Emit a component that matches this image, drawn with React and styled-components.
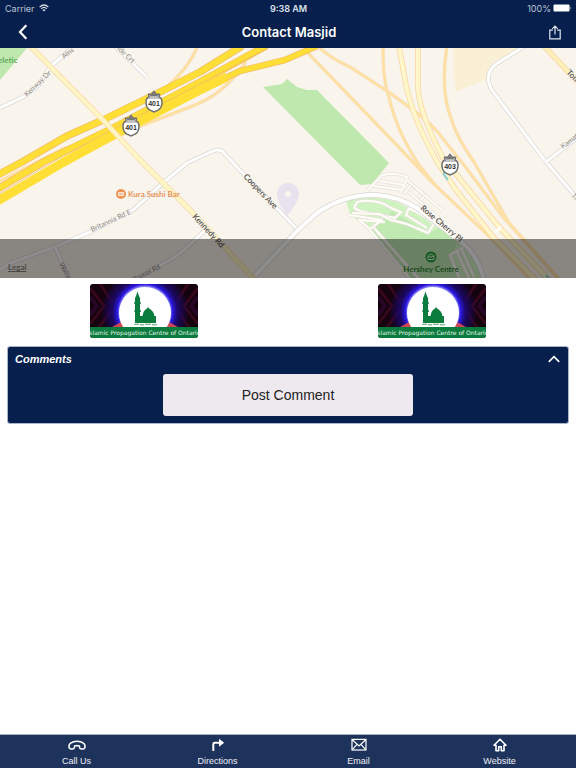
import React from "react";
import styled, { createGlobalStyle } from "styled-components";

function App() {
  const [open, setOpen] = React.useState(true);

  return (
    <Page>
      <GlobalStyle />
      <Header>
        <StatusBar>
          <StatusItem>
            Carrier <WifiIcon />
          </StatusItem>
          <Clock>9:38 AM</Clock>
          <StatusItem end>
            100% <BatteryIcon />
          </StatusItem>
        </StatusBar>
        <TitleBar>
          <IconButton aria-label="Back">
            <BackIcon />
          </IconButton>
          <Title>Contact Masjid</Title>
          <IconButton aria-label="Share">
            <ShareIcon />
          </IconButton>
        </TitleBar>
      </Header>
      <Main>
        <MapBox>
          <MasjidMap />
          <MapShade>
            <LegalLink href="#legal">Legal</LegalLink>
          </MapShade>
        </MapBox>
        <Logos>
          <LogoCell>
            <Logo id="left" />
          </LogoCell>
          <LogoCell>
            <Logo id="right" />
          </LogoCell>
        </Logos>
        <Comments>
          <CommentsHead>
            <CommentsTitle>Comments</CommentsTitle>
            <Toggle
              aria-label="Toggle comments"
              aria-expanded={open}
              onClick={() => setOpen(!open)}
            >
              <ChevronIcon />
            </Toggle>
          </CommentsHead>
          {open && <PostButton>Post Comment</PostButton>}
        </Comments>
      </Main>
      <TabBar>
        <Tab href="#call">
          <PhoneIcon />
          Call Us
        </Tab>
        <Tab href="#directions">
          <TurnIcon />
          Directions
        </Tab>
        <Tab href="#email">
          <MailIcon />
          Email
        </Tab>
        <Tab href="#website">
          <HomeIcon />
          Website
        </Tab>
      </TabBar>
    </Page>
  );
}

export default App;

const WifiIcon = () => (
  <svg width="10" height="8" viewBox="0 0 10 8" fill="none" stroke="#d5dae5" strokeWidth="1.2">
    <path d="M0.6 3.1Q5-1.1 9.4 3.1M2.2 4.8Q5 2.1 7.8 4.8" />
    <path d="M3.4 5.9Q5 4.5 6.6 5.9L5 7.6Z" fill="#d5dae5" stroke="none" />
  </svg>
);

const BatteryIcon = () => (
  <svg width="19" height="8" viewBox="0 0 19 8" fill="#fff">
    <rect x="0.5" y="0.5" width="16" height="7" rx="1" />
    <path d="M17.2 2.5q1.4 1.5 0 3z" />
  </svg>
);

const BackIcon = () => (
  <svg width="10" height="16" viewBox="0 0 10 16" fill="none" stroke="#fff" strokeWidth="2.2">
    <path d="M8.3 1.2L2 8l6.3 6.8" />
  </svg>
);

const ShareIcon = () => (
  <svg width="12" height="15" viewBox="0 0 12 15" fill="none" stroke="#e3e7ef" strokeWidth="1.2">
    <path d="M3.8 5.2H0.8v8.6h10.4V5.2H8.2M6 9.6V1.4M3.3 3.8L6 1.1l2.7 2.7" />
  </svg>
);

const ChevronIcon = () => (
  <svg width="12" height="8" viewBox="0 0 12 8" fill="none" stroke="#fff" strokeWidth="1.7">
    <path d="M0.8 6.9L6 1.6l5.2 5.3" />
  </svg>
);

const PhoneIcon = () => (
  <svg width="18" height="14" viewBox="0 0 18 14" fill="none" stroke="#fff" strokeWidth="1.6" strokeLinejoin="round">
    <path d="M2.2 10.8C0.3 9.8 0.7 6.6 2.6 5.2C6 2.5 12 2.5 15.4 5.2C17.3 6.6 17.7 9.8 15.8 10.8C14.5 11.3 12.2 11.1 11.8 9.9L11.4 8.1Q9 7.2 6.6 8.1L6.2 9.9C5.8 11.1 3.5 11.3 2.2 10.8Z" />
  </svg>
);

const TurnIcon = () => (
  <svg width="14" height="14" viewBox="0 0 14 14">
    <path d="M2.3 13V6.2Q2.3 4.8 3.8 4.8H9" fill="none" stroke="#fff" strokeWidth="2" />
    <path d="M8 0.8L13.2 4.8L8 8.8Z" fill="#fff" />
  </svg>
);

const MailIcon = () => (
  <svg width="16" height="14" viewBox="0 0 16 14" fill="none" stroke="#fff" strokeWidth="1.2">
    <rect x="1" y="1.4" width="14" height="10.6" />
    <path d="M1.3 1.8L8 8l6.7-6.2M1.3 11.7L6 6.3M14.7 11.7L10 6.3" />
  </svg>
);

const HomeIcon = () => (
  <svg width="14" height="14" viewBox="0 0 14 14" fill="none" stroke="#fff" strokeWidth="1.6" strokeLinejoin="round">
    <path d="M1 7.2L7 1.2l6 6H11v5.600H8.300V8.700H5.700v4.100H3V7.200Z" />
  </svg>
);

function Logo({ id }) {
  const glow = "glow-" + id;
  return (
    <LogoArt viewBox="0 0 108 54" role="img" aria-label="Islamic Propagation Centre of Ontario">
      <defs>
        <radialGradient id={glow} cx="55" cy="28" r="44" gradientUnits="userSpaceOnUse">
          <stop offset="0.56" stopColor="#aaa6ff" />
          <stop offset="0.63" stopColor="#2a17e0" />
          <stop offset="0.74" stopColor="#1c0865" />
          <stop offset="1" stopColor="#1c0865" stopOpacity="0" />
        </radialGradient>
      </defs>
      <rect width="108" height="54" fill="#14030f" />
      <g fill="none" stroke="#36071b" strokeWidth="3">
        <path d="M0 4L14 22L0 40M10 0L25 22L9 43M108 4L94 22L108 40M98 0L84 22L99 43" />
      </g>
      <path d="M0 13L7 22L0 31M108 13L101 22L108 31" fill="none" stroke="#280628" strokeWidth="4" />
      <rect width="108" height="44" fill={`url(#${glow})`} />
      <path d="M22 43l9-5 4 5zM88 43l-9-5-4 5z" fill="#cf4656" />
      <ellipse cx="55" cy="29" rx="26" ry="26" fill="#fff" />
      <g fill="#0b7b3e">
        <path d="M45 39V28h-0.6v-2H45V20h-0.7v-2H45V14l1-2 1.5-4.5L49 12l1 2v4h0.7v2H50v6h0.8v2H50v4h2.5Q53 26.500 57.600 24L58 22l0.500 2Q64 27 64.300 32h1.700v7Z" />
        <path d="M44 39.800h5v1h-5zM50 40.300h4v1h-4zM55 39.800h6v1h-6zM62 40.300h5v1h-5z" opacity="0.7" />
        <rect y="43" width="108" height="11" />
      </g>
      <LogoText x="54" y="51" textAnchor="middle">
        Islamic Propagation Centre of Ontario
      </LogoText>
    </LogoArt>
  );
}

function Shield({ x, y, label }) {
  return (
    <g transform={`translate(${x} ${y})`}>
      <path
        d="M-5-6L-5.500-8.500L-2-9L0-11.500L2-9L5.500-8.500L5-6Q8-5 8-1Q8 5 4 7.200L0 9L-4 7.200Q-8 5-8-1Q-8-5-5-6Z"
        fill="#fff"
        stroke="#6f6f6f"
        strokeWidth="1.500"
      />
      <path d="M-4-7L0-9.500L4-7Z" fill="#777" stroke="#777" />
      <path d="M-6-5H6" stroke="#888" />
      <ShieldText y="3" textAnchor="middle">
        {label}
      </ShieldText>
    </g>
  );
}

// every road is drawn twice: a wide casing, then a narrower fill on top
function Road({ d, casing, fill, width }) {
  return (
    <>
      <path d={d} stroke={casing} strokeWidth={width + 1.5} />
      <path d={d} stroke={fill} strokeWidth={width} />
    </>
  );
}

const streets = [
  "M0 108L23 97L38 86L50 67L72 48",
  "M115 46L147 77",
  "M0 270Q6 265 13 262L55 247L90 232L133 210L163 183L187 163L213 151Q218 149 222 151L237 167L298 230",
  "M55 247L70 280",
  "M137 278L170 260Q184 252 207 228",
  "M525 46L496 64Q486 72 489 83Q490 88 494 93L546 162L578 199",
  "M546 162L578 137",
];

const ramps = [
  "M197 48Q188 68 168 86",
  "M40 176L93 148L143 125L190 107Q224 95 246 62",
  "M0 181L33 164L67 147",
  "M318 46Q328 57 350 67L390 93L409 107Q425 118 436 130L464 165L503 217L559 280",
  "M307 52L390 138L433 183L493 240L531 280",
  "M383 46Q383 82 389 97Q396 130 419 165L436 186",
  "M447 46Q440 90 451 118Q456 136 474 162L509 223L560 280",
];

const arterials = [
  "M399 46L406 85Q414 122 438 163L456 190L493 237L536 280",
  "M418 46V88Q419 112 443 158L469 190L499 227L549 280",
];

const highway = [
  "M-4 176L22 162L67 136L103 120L150 97L200 72L242 46",
  "M-4 190L45 161L113 128L200 82L266 46",
];

const parking = [
  "M354 208L357 202Q376 198 391 208L401 212L395 218L360 211L354 208",
  "M352 213L379 214L391 220L407 224L428 233L435 222L409 208L406 215L427 228",
  "M350 215L382 220L370 229L359 220L385 222",
  "M370 230L411 280M374 228L420 280",
  "M366 192L381 176Q392 171 407 177L401 193M380 181L404 185M374 186L402 190M405 180L425 195L418 203M412 184L404 194",
  "M407 180L443 211M409 192L440 219",
  "M466 246L450 255L460 280M457 252L470 280M462 250L474 277",
];

function MasjidMap() {
  return (
    <MapArt viewBox="0 48 576 230" preserveAspectRatio="xMidYMid slice" role="img" aria-label="Map">
      <rect y="40" width="576" height="250" fill="#f9f5ed" />
      <path d="M0 48H27L0 80Z" fill="#bee8ae" />
      <path d="M453 48L455 92L488 79L489 70L523 48Z" fill="#f9f0d5" />
      <path
        d="M263 87L282 84L287 79L297 87L307 90H317L389 163L372 184L360 185Z"
        fill="#bfe8ae"
      />
      <path
        d="M346 201Q365 195 385 199Q400 201 421 216L457 242Q475 255 483 278H411L370 230L350 214Z"
        fill="#cff2c1"
      />
      <path d="M371 229L392 211L414 224L428 234L440 227L458 243L449 257L459 280H412Z" fill="#c1e9b2" />

      <g fill="none" strokeLinejoin="round">
        {parking.map((d) => (
          <Road key={d} d={d} casing="#e6e2d9" fill="#fffdf8" width={2} />
        ))}
        {streets.map((d) => (
          <Road key={d} d={d} casing="#dad8d4" fill="#fff" width={3} />
        ))}
        <Road
          d="M251 280L298 230L317 213Q344 194 376 195Q397 196 417 208L459 240Q478 254 484 280"
          casing="#dad8d4"
          fill="#fff"
          width={4}
        />
        {ramps.map((d) => (
          <Road key={d} d={d} casing="#f9dfbd" fill="#fee1a1" width={2} />
        ))}
        {arterials.map((d) => (
          <Road key={d} d={d} casing="#f8d49f" fill="#fff7cb" width={4} />
        ))}
        <path d="M496 232L501 227" stroke="#fff" strokeWidth="3" />
        {highway.map((d) => (
          <Road key={d} d={d} casing="#f2be69" fill="#ffde35" width={6} />
        ))}
        <Road
          d="M-4 202L62 163L117 133L200 90L240 71L285 60L317 46"
          casing="#f2be69"
          fill="#ffde35"
          width={5}
        />
        <path d="M-4 202L62 163L117 133L200 90L227 77" stroke="#ffde35" strokeWidth="9" />
        <path d="M-4 196L59 158L117 127L200 84L270 47" stroke="#edbd67" strokeWidth="0.8" />
        <Road d="M30 46L103 120L140 160L193 213L255 280" casing="#f9d9aa" fill="#fff5c5" width={4} />
        <Road d="M544 46L578 82" casing="#f8d49f" fill="#fff0b9" width={4} />
      </g>
      <path d="M443 173l5 7M546 275l4 5" stroke="#83d3e4" strokeWidth="2" />

      <path
        d="M287 216Q277 202 277 194A11 11 0 0 1 299 194Q299 202 287 216ZM288 191a3 3 0 1 0 0 6a3 3 0 1 0 0-6Z"
        fill="#e8e2ef"
        fillRule="evenodd"
      />

      <Shield x={154} y={103} label="401" />
      <Shield x={131} y={127} label="401" />
      <Shield x={450} y={166} label="403" />

      <PlaceText x="-6" y="63" tone="#5fa95d">aeletic</PlaceText>
      <StreetText transform="translate(27 97) rotate(-44)">Kenway Dr</StreetText>
      <StreetText transform="translate(64 59) rotate(-40)">Alns</StreetText>
      <StreetText transform="translate(117 49) rotate(44)">ide Crt</StreetText>
      <StreetText transform="translate(92 232) rotate(-25)">Britannia Rd E</StreetText>
      <StreetText transform="translate(59 264) rotate(62)">Walla</StreetText>
      <StreetText transform="translate(134 282) rotate(-27)">Brunel Rd</StreetText>
      <StreetText dark transform="translate(243 177) rotate(46)">Coopers Ave</StreetText>
      <StreetText dark transform="translate(192 217) rotate(47)">Kennedy Rd</StreetText>
      <StreetText dark transform="translate(420 209) rotate(40)">Rose Cherry Pl</StreetText>
      <StreetText dark transform="translate(566 73) rotate(45)">Tom</StreetText>
      <StreetText transform="translate(563 149) rotate(-38)">Kamat</StreetText>
      <StreetText transform="translate(571 196) rotate(48)">Ti</StreetText>

      <circle cx="121" cy="194" r="5" fill="#ee9452" />
      <path d="M118.500 192.500h5v3h-5zM118.500 194h5" fill="none" stroke="#fff" strokeWidth="0.8" />
      <PlaceText x="128" y="197" tone="#e8935b">Kura Sushi Bar</PlaceText>
      <circle cx="431" cy="257" r="5.500" fill="#25a53c" />
      <path d="M428 259.500v-4l2 1.500h2l2-1.500v4zM429 255l2-1 2 1" fill="none" stroke="#e5f8df" strokeWidth="1" />
      <PlaceText x="431" y="272" textAnchor="middle" tone="#318a38">Hershey Centre</PlaceText>
    </MapArt>
  );
}

const GlobalStyle = createGlobalStyle`
  * {
    box-sizing: border-box;
  }
  body {
    margin: 0;
    background: #fff;
    font-family: "Liberation Sans", Arial, sans-serif;
  }
  button {
    font-family: inherit;
    border: 0;
    padding: 0;
    cursor: pointer;
  }
  svg {
    display: block;
  }
`;

const Page = styled.div`
  display: flex;
  flex-direction: column;
  min-height: 100vh;
`;

const Header = styled.header`
  background: #061f4d;
  color: #fff;
  font-family: Inter, "Liberation Sans", sans-serif;
`;

const StatusBar = styled.div`
  display: grid;
  grid-template-columns: 1fr auto 1fr;
  align-items: center;
  height: 16px;
  padding: 0 4px 0 5px;
  font-size: 9px;
`;

const StatusItem = styled.span`
  display: flex;
  align-items: center;
  justify-content: ${(props) => (props.end ? "flex-end" : "flex-start")};
  gap: ${(props) => (props.end ? "2px" : "4px")};
  color: #bcc4d4;
`;

const Clock = styled.span`
  font-weight: 600;
  color: #dfe3ec;
`;

const TitleBar = styled.div`
  display: flex;
  align-items: center;
  justify-content: space-between;
  height: 32px;
  padding: 0 10px 0 12px;
`;

const IconButton = styled.button`
  display: flex;
  align-items: center;
  justify-content: center;
  width: 22px;
  height: 32px;
  background: none;
`;

const Title = styled.h1`
  margin: 0;
  font-size: 13px;
  font-weight: 600;
`;

const Main = styled.main`
  flex: 1;
`;

const MapBox = styled.div`
  position: relative;
`;

const MapArt = styled.svg`
  width: 100%;
  height: 230px;
`;

const MapShade = styled.div`
  position: absolute;
  left: 0;
  right: 0;
  bottom: 0;
  display: flex;
  align-items: flex-end;
  height: 39px;
  padding: 0 8px 6px;
  background: rgba(0, 0, 0, 0.45);
`;

const LegalLink = styled.a`
  color: #4b4845;
  font-family: Lato, sans-serif;
  font-size: 8px;
  font-weight: 700;
  line-height: 10px;
`;

const StreetText = styled.text`
  fill: ${(props) => props.tone || (props.dark ? "#55524f" : "#88857f")};
  stroke: #f9f5ed;
  stroke-width: 1px;
  paint-order: stroke;
  font-family: Lato, sans-serif;
  font-size: ${(props) => (props.dark ? "8px" : "7px")};
  font-weight: ${(props) => (props.dark ? 600 : 400)};
`;

const PlaceText = styled(StreetText)`
  stroke: none;
  font-size: 8px;
  font-weight: 700;
`;

const ShieldText = styled.text`
  fill: #333;
  font-family: "Liberation Sans", sans-serif;
  font-size: 7px;
  font-weight: 700;
`;

const Logos = styled.div`
  display: flex;
  padding: 6px 0 8px;
`;

const LogoCell = styled.div`
  display: flex;
  flex: 1;
  justify-content: center;
`;

const LogoArt = styled.svg`
  width: 108px;
  height: 54px;
  border-radius: 3px;
`;

const LogoText = styled.text`
  fill: #e2f5e8;
  font-family: "DejaVu Sans", sans-serif;
  font-size: 6px;
`;

const Comments = styled.section`
  margin: 0 7px;
  padding-bottom: 7px;
  border: 1px solid #a9b3c9;
  border-radius: 3px;
  background: #061f4d;
  color: #fff;
`;

const CommentsHead = styled.div`
  display: flex;
  align-items: center;
  justify-content: space-between;
  height: 24px;
  margin-bottom: 3px;
  padding: 0 8px 0 7px;
`;

const CommentsTitle = styled.h2`
  margin: 0;
  font-size: 11px;
  font-style: italic;
  font-weight: 700;
`;

const Toggle = styled.button`
  display: flex;
  background: none;
  color: #fff;
`;

const PostButton = styled.button`
  display: block;
  width: 250px;
  max-width: 100%;
  height: 42px;
  margin: 0 auto;
  border-radius: 3px;
  background: #eee9ef;
  color: #222;
  font-size: 14px;
`;

const TabBar = styled.nav`
  display: flex;
  height: 34px;
  padding: 0 6px;
  background: #1e335c;
  border-top: 1px solid #a9b0bf;
`;

const Tab = styled.a`
  display: flex;
  flex: 1;
  flex-direction: column;
  align-items: center;
  gap: 3px;
  padding-top: 3px;
  color: #eef0f5;
  font-size: 9px;
  line-height: 12px;
  text-decoration: none;
`;
